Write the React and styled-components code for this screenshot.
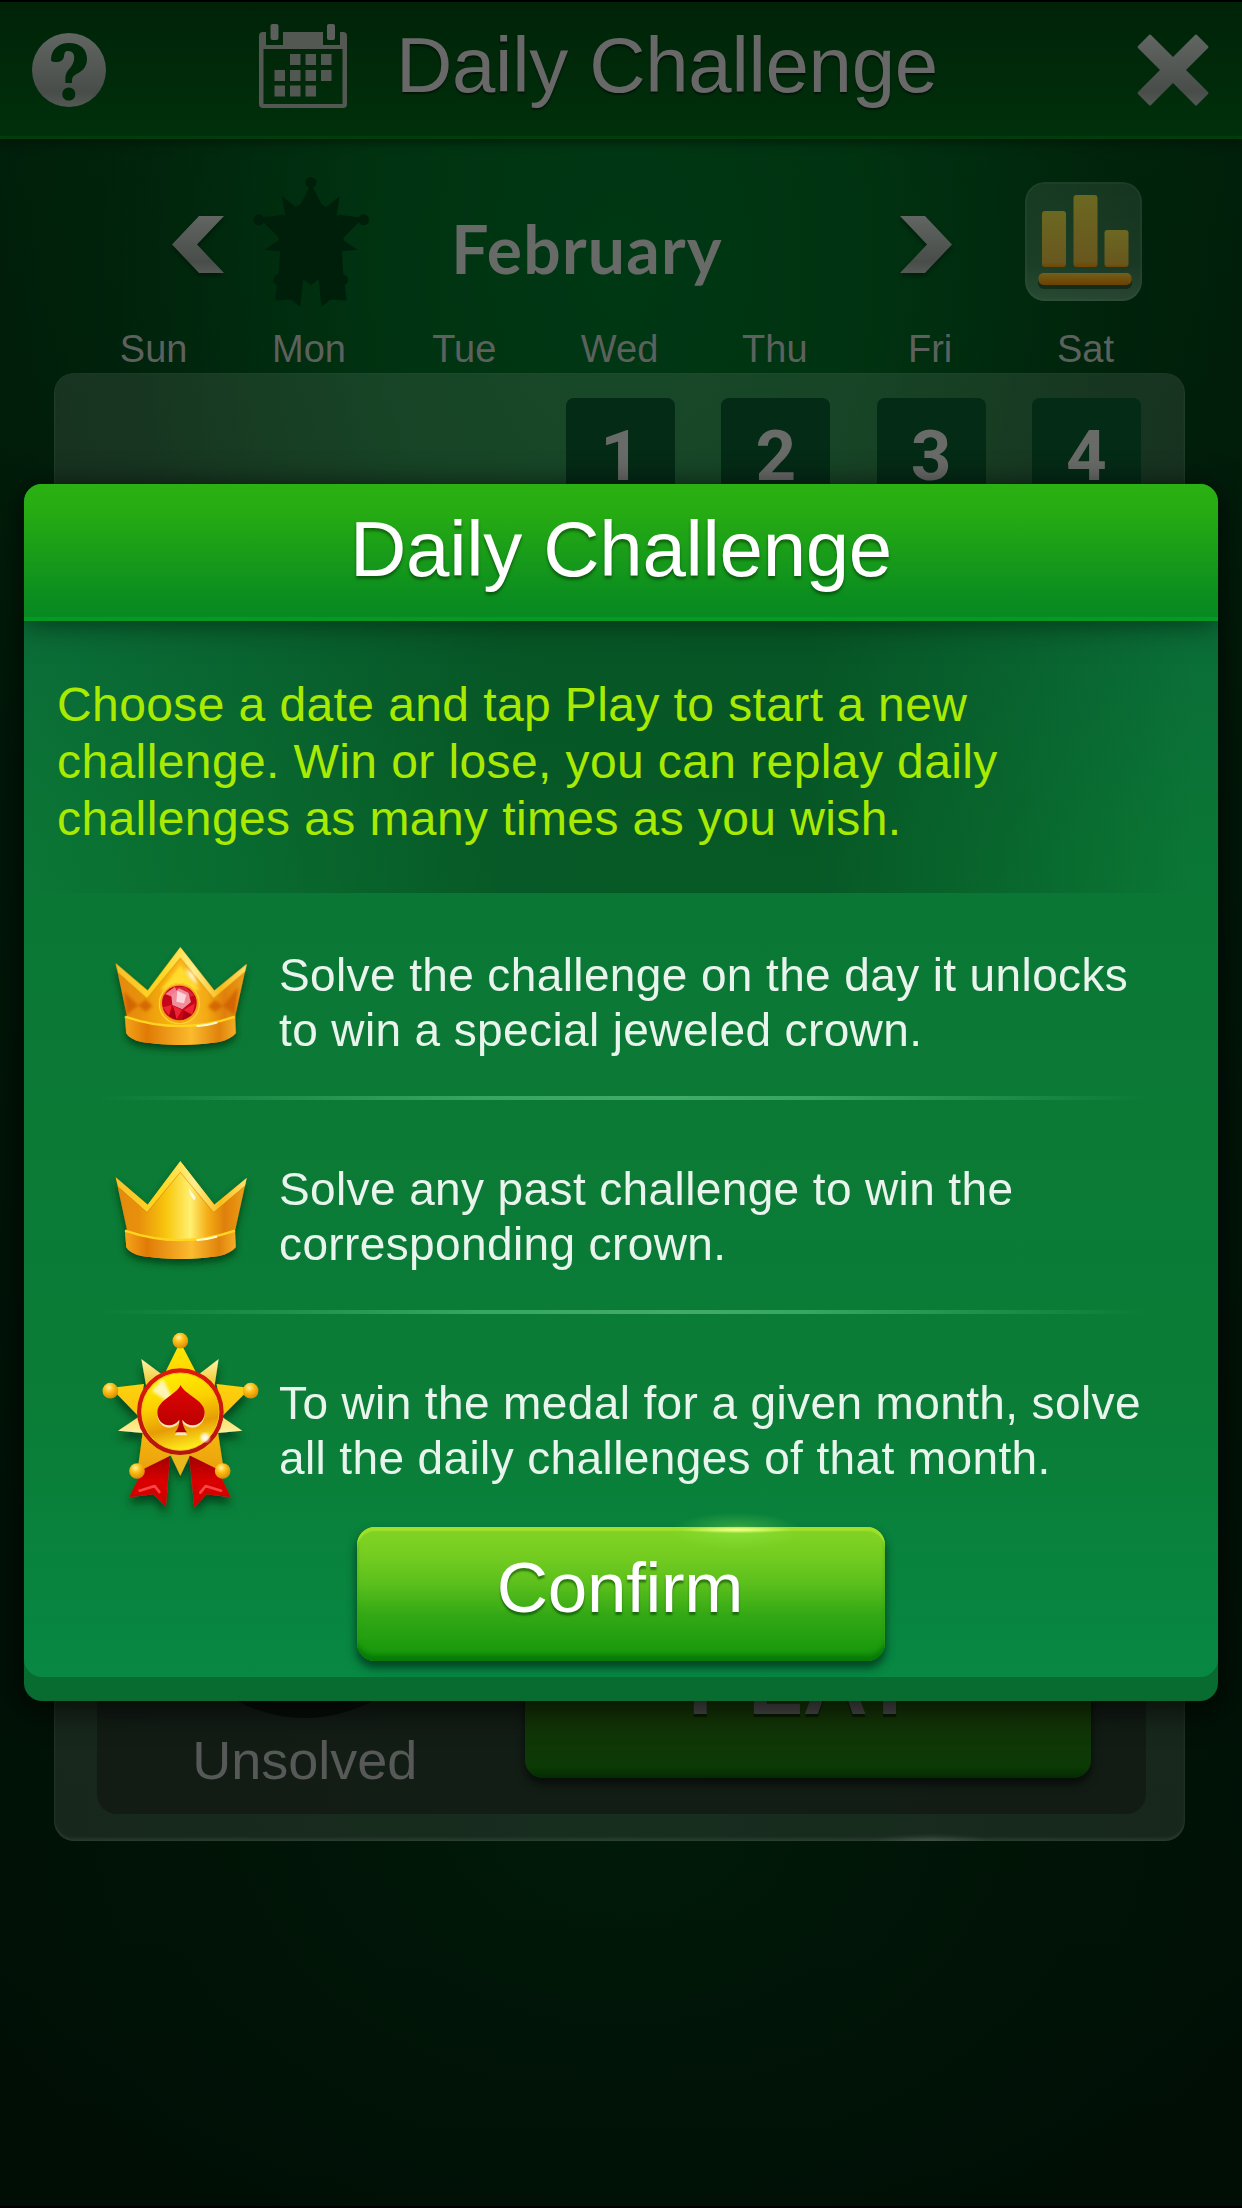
import React from "react";
import styled, { createGlobalStyle, css } from "styled-components";

const GlobalStyle = createGlobalStyle`
  * { box-sizing: border-box; }
  body {
    margin: 0;
    background: #000;
    font-family: "Liberation Sans", Arial, Helvetica, sans-serif;
    font-variant-ligatures: none;
  }
`;

const Page = styled.div`
  position: relative;
  display: flex;
  flex-direction: column;
  width: 1242px;
  height: 2208px;
  overflow: hidden;
  border-bottom: 2px solid #000;
  background:
    radial-gradient(ellipse 720px 520px at 50% 1820px, rgba(0, 30, 10, 0.75) 0%, rgba(0, 26, 9, 0.45) 50%, rgba(0, 20, 8, 0) 100%),
    radial-gradient(ellipse 700px 1000px at 50% 270px, #003814 0%, rgba(0, 54, 18, 0.88) 35%, rgba(0, 42, 14, 0.45) 72%, rgba(0, 30, 10, 0) 100%),
    linear-gradient(180deg, #001f0a 0%, #001a09 25%, #001106 75%, #000e05 100%);
`;

const TopBar = styled.header`
  flex: none;
  display: flex;
  align-items: flex-start;
  height: 139px;
  padding: 24px 33px 0 32px;
  border-top: 2px solid #000;
  border-bottom: 3px solid #003d0b;
  background: linear-gradient(180deg, #002308 0%, #002a0a 55%, #00300b 100%);
  box-shadow: 0 3px 8px rgba(0, 16, 6, 0.7);
`;

const HelpIcon = styled.svg`
  width: 74px;
  height: 74px;
  margin-top: 7px;
`;

const CalendarIcon = styled.svg`
  width: 88px;
  height: 86px;
  margin: -2px 0 0 153px;
`;

const Title = styled.h1`
  margin: -5px 0 0 49px;
  color: #686868;
  font-size: 78px;
  font-weight: 400;
  line-height: 88px;
  letter-spacing: -0.3px;
  white-space: nowrap;
  text-shadow: 0 2px 2px rgba(0, 0, 0, 0.5);
`;

const CloseIcon = styled.svg`
  width: 72px;
  height: 74px;
  margin: 7px 0 0 auto;
`;

const MonthRow = styled.nav`
  flex: none;
  display: flex;
  align-items: center;
  height: 196px;
  padding: 10px 0 0 172px;
`;

const Chevron = styled.svg`
  width: 52px;
  height: 62px;
  margin-left: ${(p) => (p.$next ? 96 : 0)}px;
  margin-top: 9px;
  transform: ${(p) => (p.$next ? "scaleX(-1)" : "none")};
  filter: drop-shadow(0 3px 2px rgba(0, 0, 0, 0.35));
`;

const MutedMedal = styled.div`
  display: flex;
  width: 118px;
  margin: -2px 0 0 28px;
`;

const Month = styled.h2`
  width: 434px;
  margin: 13px 0 0;
  color: #686a68;
  font-family: Lato, "Open Sans", sans-serif;
  font-size: 66px;
  font-weight: 700;
  line-height: 80px;
  letter-spacing: 1.2px;
  text-align: center;
`;

const StatsButton = styled.div`
  display: flex;
  width: 117px;
  height: 119px;
  margin: -2px 0 0 73px;
  border-radius: 20px;
  background: linear-gradient(180deg, rgba(255, 255, 255, 0.085), rgba(255, 255, 255, 0.1) 70%, rgba(255, 255, 255, 0.16));
  box-shadow: inset 0 0 0 2px rgba(255, 255, 255, 0.03);
`;

const Weekdays = styled.div`
  flex: none;
  display: grid;
  grid-template-columns: repeat(7, 155.3px);
  height: 37px;
  padding-left: 76px;
  color: #5c615d;
  font-size: 38px;
  line-height: 28px;
  text-align: center;
`;

const Panel = styled.section`
  flex: none;
  display: flex;
  flex-direction: column;
  justify-content: space-between;
  width: 1131px;
  height: 1468px;
  margin: 1px 0 0 54px;
  padding: 25px 39px 27px 23px;
  border-radius: 20px;
  background:
    radial-gradient(ellipse 60px 8px at 877px 100%, rgba(255, 255, 255, 0.12), transparent),
    rgba(255, 255, 255, 0.09);
  box-shadow:
    inset 0 0 3px 0 rgba(255, 255, 255, 0.06),
    inset 0 -3px 3px rgba(255, 255, 255, 0.07);
`;

const Days = styled.div`
  display: grid;
  grid-template-columns: repeat(7, 155.3px);
  justify-items: center;
`;

const Day = styled.div`
  grid-column-start: ${(p) => p.$column};
  width: 109px;
  height: 125px;
  border-radius: 8px;
  background: #042b16;
  color: #696b69;
  font-family: Roboto, "Liberation Sans", sans-serif;
  font-size: 71px;
  font-weight: 700;
  line-height: 115px;
  text-align: center;
`;

const Status = styled.div`
  display: flex;
  align-items: flex-end;
  gap: 108px;
  width: 1049px;
  height: 330px;
  margin-left: 20px;
  padding: 0 55px 36px 95px;
  border-radius: 0 0 20px 20px;
  background: rgba(15, 22, 17, 0.65);
`;

const Result = styled.div`
  display: flex;
  flex-direction: column;
  align-items: center;
  width: 226px;
  margin-bottom: -15px;
  color: #565957;
  font-size: 54px;
  line-height: 66px;
`;

const EmptyCrown = styled.svg`
  width: 148px;
  height: 108px;
  margin: 0 0 4px;
`;

const PlayButton = styled.div`
  width: 567px;
  height: 144px;
  padding-right: 9px;
  border-radius: 18px;
  background: linear-gradient(180deg, #1a3706 0%, #143407 55%, #0b3a05 92%, #042b02 100%);
  box-shadow: 0 6px 10px rgba(0, 0, 0, 0.6);
  color: #4a4a4a;
  font-size: 90px;
  font-weight: 700;
  line-height: 98px;
  text-align: center;
  text-shadow: 0 3px 1px rgba(0, 20, 0, 0.7);
`;

const Dialog = styled.section`
  position: absolute;
  top: 484px;
  left: 24px;
  display: flex;
  width: 1194px;
  height: 1217px;
  border-radius: 18px;
  background: #086b30;
  box-shadow: 0 6px 30px 4px rgba(0, 0, 0, 0.65);
`;

const DialogSheet = styled.div`
  display: flex;
  flex-direction: column;
  width: 1194px;
  height: 1193px;
  overflow: hidden;
  border-radius: 18px;
  background: linear-gradient(180deg, #0b6c38 11%, #0a7635 30%, #0b7935 45%, #0a7d37 78%, #078843 100%);
`;

const DialogTitle = styled.h2`
  flex: none;
  z-index: 1;
  height: 137px;
  margin: 0;
  border-bottom: 4px solid #059a24;
  background: linear-gradient(180deg, #2cb112 0%, #26ab13 22%, #0a8c20 88%, #078a22 100%);
  box-shadow: 0 4px 26px rgba(0, 30, 12, 0.65);
  color: #fff;
  font-size: 78px;
  font-weight: 400;
  line-height: 131px;
  letter-spacing: -0.3px;
  text-align: center;
  text-shadow: 0 3px 3px rgba(0, 50, 0, 0.55);
`;

const Intro = styled.p`
  flex: none;
  height: 272px;
  margin: 0;
  padding: 55px 0 0 33px;
  background: linear-gradient(90deg, rgba(5, 75, 30, 0) 0%, rgba(5, 75, 30, 0.3) 20%, rgba(5, 74, 30, 0.65) 40%, rgba(5, 74, 30, 0.68) 66%, rgba(5, 75, 30, 0.32) 84%, rgba(5, 75, 30, 0) 98%);
  color: #a9ea02;
  font-size: 48px;
  line-height: 57px;
  letter-spacing: 0.4px;
  white-space: pre-line;
`;

const Rules = styled.ul`
  flex: none;
  margin: -7px 0 0;
  padding: 0;
  list-style: none;
`;

const Rule = styled.li`
  display: flex;
  align-items: flex-start;
  height: ${(p) => (p.$last ? 213 : 214)}px;
  padding-left: 65px;
  ${(p) =>
    !p.$last &&
    css`
      background: linear-gradient(90deg, transparent 6%, #36a660 38%, #43ad68 54%, #36a660 66%, transparent 94%) 0 100% / 100% 4px no-repeat;
    `}
`;

const RuleText = styled.p`
  margin: 0;
  padding-top: 62px;
  color: #e9f5ec;
  font-size: 46px;
  line-height: 54.5px;
  letter-spacing: 0.38px;
  white-space: pre-line;
`;

const RuleIcon = styled.div`
  flex: none;
  width: 190px;
  padding-top: ${(p) => p.$top}px;
`;

const Confirm = styled.button`
  position: relative;
  flex: none;
  align-self: center;
  width: 528px;
  height: 134px;
  padding: 0 2px 13px 0;
  border: 0;
  border-radius: 18px;
  background: linear-gradient(180deg, #82d424 0%, #76cd21 20%, #5cc01c 42%, #34a915 65%, #1c9b0e 90%, #16960d 100%);
  box-shadow:
    inset 0 4px 1px #a1df2b,
    inset 0 -8px 5px -2px #087a06,
    0 6px 8px 1px rgba(0, 52, 28, 0.8);
  color: #fff;
  font: 71px/118px "Liberation Sans", Arial, sans-serif;
  letter-spacing: -0.3px;
  text-shadow: 0 3px 2px rgba(0, 60, 0, 0.55);
`;

const Glint = styled.span`
  position: absolute;
  top: -16px;
  left: 310px;
  width: 140px;
  height: 40px;
  background:
    radial-gradient(ellipse 56px 3.5px at 50% 47%, #fffd9a, rgba(240, 255, 120, 0.6) 50%, transparent),
    radial-gradient(ellipse 66px 19px at 50% 50%, rgba(150, 240, 80, 0.38), transparent);
`;

function SteelGradient({ id }) {
  return (
    <linearGradient id={id} x1="0" y1="0" x2="0" y2="1">
      <stop offset="0" stopColor="#616662" />
      <stop offset=".8" stopColor="#484d49" />
      <stop offset="1" stopColor="#545955" />
    </linearGradient>
  );
}

function Help() {
  return (
    <HelpIcon viewBox="0 0 74 74">
      <defs><SteelGradient id="helpFill" /></defs>
      <circle cx="37" cy="37" r="37" fill="url(#helpFill)" />
      <path d="M19 27C19 16 27 10 37 10C48 10 55 16 55 26C55 36 48 39 43 42C40 44 40 46 40 50H33.500C33 42 34 39 38 35C43 30 45 18 36 18C29 18 36 28 25.500 29C21 29 19 28.500 19 27Z" fill="#00290a" />
      <circle cx="36.800" cy="61" r="6.600" fill="#00290a" />
    </HelpIcon>
  );
}

const dots = [[31, 30], [46.5, 30], [62, 30], [15.5, 46], [31, 46], [46.5, 46], [62, 46], [15.5, 61.5], [31, 61.5], [46.5, 61.5]];

function Calendar() {
  return (
    <CalendarIcon viewBox="0 0 88 86">
      <path d="M4 8H7V21H24V8H64V21H81V8H84Q88 8 88 12V80Q88 84 84 84H4Q0 84 0 80V12Q0 8 4 8ZM4.500 25V80H83.500V25Z" fill="#535853" fillRule="evenodd" />
      <rect x="11.500" y="0" width="8" height="16" rx="2" fill="#5b605c" />
      <rect x="68" y="0" width="8" height="16" rx="2" fill="#5b605c" />
      {dots.map(([x, y]) => (
        <rect key={x + "-" + y} x={x} y={y} width="10.500" height="11" fill="#525752" />
      ))}
    </CalendarIcon>
  );
}

function Close() {
  return (
    <CloseIcon viewBox="0 0 72 74">
      <defs><SteelGradient id="closeFill" /></defs>
      <path d="M12 2Q13 1 14 2L36 24L58 2Q59 1 60 2L71 13Q72 14 71 15L49 37L71 59Q72 60 71 61L60 72Q59 73 58 72L36 50L14 72Q13 73 12 72L1 61Q0 60 1 59L23 37L1 15Q0 14 1 13Z" fill="url(#closeFill)" />
    </CloseIcon>
  );
}

function Arrow({ next }) {
  const id = next ? "nextFill" : "prevFill";
  return (
    <Chevron $next={next} viewBox="0 0 52 62">
      <defs><SteelGradient id={id} /></defs>
      <path d="M0 28.500L27 0H52L25 28.500L52 57H27Z" fill={`url(#${id})`} />
    </Chevron>
  );
}

const bars = [[17, 29, 56], [48.5, 13, 72], [79.5, 48, 37]];

function Stats() {
  return (
    <svg width="117" height="119" viewBox="0 0 117 119">
      <defs>
        <linearGradient id="barFill" x1="0" y1="0" x2="0" y2="1">
          <stop offset="0" stopColor="#6b6821" />
          <stop offset=".92" stopColor="#68571e" />
          <stop offset="1" stopColor="#724600" />
        </linearGradient>
        <linearGradient id="baseFill" x1="0" y1="0" x2="0" y2="1">
          <stop offset="0" stopColor="#73601b" />
          <stop offset="1" stopColor="#6c4000" />
        </linearGradient>
      </defs>
      <rect x="13" y="95" width="94" height="12" rx="6" fill="#02160a" opacity=".5" />
      {bars.map(([x, y, h]) => (
        <rect key={x} x={x} y={y} width="24" height={h} rx="3" fill="url(#barFill)" />
      ))}
      <rect x="13.500" y="91" width="93" height="12" rx="5" fill="url(#baseFill)" />
    </svg>
  );
}

const ballSpots = [[274, 92], [64, 242], [485, 242], [144, 483], [401, 483]];
const ribbonPaths = ["M243 434L231 592L193 553L120 562L166 470Z", "M300 434L316 592L353 553L425 562L382 470Z"];
const spikesPath = "M157 147L222 196L172 230ZM389 147L326 196L376 230ZM87 362L150 320L172 370ZM460 362L398 320L376 370Z";
const armsPath = "M225 195L266 112H282L325 195ZM165 222L82 232L78 246L148 318ZM383 222L466 232L472 246L400 318ZM161 368L148 465L165 476L250 434ZM387 368L402 465L383 476L298 434Z";

function SilhouetteMedal() {
  return (
    <svg width="118" height="131" viewBox="39 66 470 526">
      <g fill="#001f0b">
        <path d={spikesPath} />
        <path d={armsPath} />
        <circle cx="274" cy="305" r="132" />
        {ballSpots.map(([x, y]) => <circle key={x} cx={x} cy={y} r="22" />)}
        <path d="M150 350H398L402 480H306L274 505L242 480H146Z" />
        <path d="M248 430L231 592L193 562L130 566L150 400ZM300 430L316 592L353 562L417 566L397 400Z" />
      </g>
    </svg>
  );
}

function Medal() {
  return (
    <svg width="190" height="216" viewBox="0 12 570 648">
      <defs>
        <linearGradient id="rayFill" x1="0" y1="0" x2="0" y2="1">
          <stop offset="0" stopColor="#ffe600" />
          <stop offset=".5" stopColor="#fcc50d" />
          <stop offset="1" stopColor="#eba20b" />
        </linearGradient>
        <linearGradient id="spikeFill" x1="0" y1="0" x2="0" y2="1">
          <stop offset="0" stopColor="#fff3a8" />
          <stop offset=".3" stopColor="#f3cf3c" />
          <stop offset=".75" stopColor="#f8dc62" />
          <stop offset="1" stopColor="#fff0a0" />
        </linearGradient>
        <radialGradient id="ballFill" cx=".4" cy=".3" r=".75">
          <stop offset="0" stopColor="#fff3a0" />
          <stop offset=".4" stopColor="#fdbf15" />
          <stop offset="1" stopColor="#d88404" />
        </radialGradient>
        <linearGradient id="faceFill" x1=".3" y1="0" x2=".55" y2="1">
          <stop offset="0" stopColor="#fff000" />
          <stop offset=".4" stopColor="#fbd000" />
          <stop offset=".7" stopColor="#e79c06" />
          <stop offset="1" stopColor="#fff01d" />
        </linearGradient>
        <linearGradient id="ringFill" x1="0" y1="0" x2="0" y2="1">
          <stop offset="0" stopColor="#e01a08" />
          <stop offset="1" stopColor="#b31410" />
        </linearGradient>
        <linearGradient id="spadeFill" x1="0" y1="0" x2="0" y2="1">
          <stop offset="0" stopColor="#e00505" />
          <stop offset="1" stopColor="#b50000" />
        </linearGradient>
        <linearGradient id="ribbonFill" x1="0" y1="0" x2="0" y2="1">
          <stop offset="0" stopColor="#9d0303" />
          <stop offset=".5" stopColor="#d90606" />
          <stop offset="1" stopColor="#cc0202" />
        </linearGradient>
        <filter id="medalShadow" x="-20%" y="-20%" width="140%" height="150%">
          <feDropShadow dx="0" dy="20" stdDeviation="13" floodColor="#002d12" floodOpacity=".75" />
        </filter>
        <filter id="soften"><feGaussianBlur stdDeviation="5" /></filter>
      </defs>
      <g filter="url(#medalShadow)">
        {ribbonPaths.map((d) => <path key={d} d={d} fill="url(#ribbonFill)" />)}
        <path d="M152 542L197 528L211 546M396 542L350 528L334 548" fill="none" stroke="#fb4444" strokeWidth="8" strokeLinejoin="round" strokeLinecap="round" />
        <path d={spikesPath} fill="url(#spikeFill)" />
        <path d="M240 425H308L274 497Z" fill="#e9b81a" />
        <path d={armsPath} fill="url(#rayFill)" />
      </g>
      {ballSpots.map(([x, y]) => <circle key={x} cx={x} cy={y} r="23.500" fill="url(#ballFill)" />)}
      <circle cx="274" cy="305" r="130" fill="url(#ringFill)" />
      <circle cx="274" cy="305" r="116" fill="url(#faceFill)" stroke="#f9c11c" strokeWidth="3" />
      <path d="M266 295L188 242L222 207Z" fill="#fff" opacity=".7" filter="url(#soften)" />
      <circle cx="348" cy="383" r="13" fill="#fff" opacity=".9" filter="url(#soften)" />
      <path d="M275 230C285 258 347 275 347 312C347 353 300 367 280 337C281 357 287 365 295 376H257C266 365 271 357 271 337C250 367 205 353 205 312C205 275 264 258 275 230Z" fill="#fff1cf" opacity=".85" />
      <path d="M275 225C285 253 347 270 347 307C347 348 300 359 280 329C281 347 287 357 294 367H258C266 357 271 347 271 329C250 359 205 348 205 307C205 270 264 253 275 225Z" fill="url(#spadeFill)" />
    </svg>
  );
}

function Crown({ jewel }) {
  const id = jewel ? "jeweled" : "plain";
  return (
    <svg width="190" height="150" viewBox="0 0 570 450">
      <defs>
        <linearGradient id={id + "Body"} x1="0" y1="0" x2="1" y2="0">
          <stop offset="0" stopColor="#e58a08" />
          <stop offset=".18" stopColor="#e8900a" />
          <stop offset=".4" stopColor={jewel ? "#f6b210" : "#f9ca12"} />
          <stop offset=".57" stopColor={jewel ? "#f9ba25" : "#fff071"} />
          <stop offset=".7" stopColor={jewel ? "#f3a812" : "#f5ae16"} />
          <stop offset=".83" stopColor="#df7f07" />
          <stop offset="1" stopColor="#eda11a" />
        </linearGradient>
        <linearGradient id={id + "Band"} x1="0" y1="0" x2="1" y2="0">
          <stop offset="0" stopColor="#f5a41b" />
          <stop offset=".2" stopColor="#e07b06" />
          <stop offset=".6" stopColor="#fcbb2e" />
          <stop offset=".85" stopColor="#e0830c" />
          <stop offset="1" stopColor="#f5ad26" />
        </linearGradient>
        <linearGradient id={id + "Rim"} x1="0" y1="0" x2="1" y2="0">
          <stop offset="0" stopColor="#f7c22e" />
          <stop offset=".35" stopColor="#ffd820" />
          <stop offset=".5" stopColor="#ffe45c" />
          <stop offset=".6" stopColor="#ffed90" />
          <stop offset=".8" stopColor="#fbbd18" />
          <stop offset="1" stopColor="#ffe070" />
        </linearGradient>
        <filter id={id + "Shadow"} x="-20%" y="-20%" width="140%" height="150%">
          <feDropShadow dx="0" dy="14" stdDeviation="11" floodColor="#00320f" floodOpacity=".75" />
        </filter>
        <filter id={id + "Blur"}><feGaussianBlur stdDeviation="5" /></filter>
      </defs>
      <path d="M80 130L176 212L274 82L376 212L473 132L438 290L440 340Q425 358 390 366Q274 384 158 366Q122 358 112 340L108 290L114 288Z" fill={`url(#${id}Body)`} filter={`url(#${id}Shadow)`} />
      {jewel && (
        <g filter="url(#jeweledBlur)">
          <path d="M105 215L148 256L112 285ZM148 256L170 238L190 258L170 276ZM448 200L402 258L437 285ZM402 258L378 240L356 260L378 276Z" fill="#ce5c04" opacity=".8" />
          <path d="M274 135L215 210H333Z" fill="#ffdc2e" />
        </g>
      )}
      <path d="M80 130L176 212L274 82L376 212L473 132L468 155L374 234L274 112L174 234L88 158Z" fill={`url(#${id}Rim)`} />
      <path d="M88 160L174 236L274 115L374 236L466 158" fill="none" stroke="#d58a0a" strokeWidth="3" opacity=".6" />
      <path d="M108 290Q274 350 438 290L440 340Q425 358 390 366Q274 384 158 366Q122 358 112 340Z" fill={`url(#${id}Band)`} />
      <path d="M108 290Q274 347 438 290" fill="none" stroke="#ffd51f" strokeWidth="7" />
      <path d="M325 318Q355 316 382 308" fill="none" stroke="#fffbd0" strokeWidth="6" strokeLinecap="round" />
      {!jewel && <path d="M300 165L320 190L316 200Q302 185 300 165Z" fill="#fff" opacity=".8" />}
      {jewel && (
        <g>
          <path d="M288 145Q300 180 328 195L312 160Z" fill="#fff8cc" filter="url(#jeweledBlur)" />
          <circle cx="271" cy="251" r="62" fill="#f2a20c" />
          <circle cx="271" cy="251" r="60" fill="none" stroke="#ffd03a" strokeWidth="4" />
          <circle cx="271" cy="249" r="52" fill="#c60618" />
          <path d="M228 222L258 200L275 240Z" fill="#f4798a" />
          <path d="M258 200L290 201L275 238ZM290 201L316 226L276 240Z" fill="#d8243a" />
          <path d="M247 226L270 205L298 218L306 246L280 268L250 255Z" fill="#ef8d9a" />
          <path d="M265 212L292 225L285 250L262 245Z" fill="#fbd3d8" />
          <path d="M222 262L248 255L240 287ZM252 258L279 270L262 298ZM284 270L310 284L318 250Z" fill="#ee2436" />
          <path d="M240 288L254 262L262 298ZM285 272L308 286L280 300Z" fill="#a90012" />
        </g>
      )}
    </svg>
  );
}

const weekdays = ["Sun", "Mon", "Tue", "Wed", "Thu", "Fri", "Sat"];
const firstWeek = [1, 2, 3, 4];

export default function App() {
  return (
    <Page>
      <GlobalStyle />
      <TopBar>
        <Help />
        <Calendar />
        <Title>Daily Challenge</Title>
        <Close />
      </TopBar>
      <MonthRow>
        <Arrow />
        <MutedMedal><SilhouetteMedal /></MutedMedal>
        <Month>February</Month>
        <Arrow next />
        <StatsButton><Stats /></StatsButton>
      </MonthRow>
      <Weekdays>
        {weekdays.map((d) => <span key={d}>{d}</span>)}
      </Weekdays>
      <Panel>
        <Days>
          {firstWeek.map((n) => <Day key={n} $column={n + 3}>{n}</Day>)}
        </Days>
        <Status>
          <Result>
            <EmptyCrown viewBox="0 0 148 108">
              <path d="M2 0H146V84Q74 122 2 84Z" fill="#070d09" />
            </EmptyCrown>
            Unsolved
          </Result>
          <PlayButton>PLAY</PlayButton>
        </Status>
      </Panel>
      <Dialog>
        <DialogSheet>
          <DialogTitle>Daily Challenge</DialogTitle>
          <Intro>{"Choose a date and tap Play to start a new\nchallenge. Win or lose, you can replay daily\nchallenges as many times as you wish."}</Intro>
          <Rules>
            <Rule>
              <RuleIcon $top={34}><Crown jewel /></RuleIcon>
              <RuleText>{"Solve the challenge on the day it unlocks\nto win a special jeweled crown."}</RuleText>
            </Rule>
            <Rule>
              <RuleIcon $top={34}><Crown /></RuleIcon>
              <RuleText>{"Solve any past challenge to win the\ncorresponding crown."}</RuleText>
            </Rule>
            <Rule $last>
              <RuleIcon $top={0}><Medal /></RuleIcon>
              <RuleText>{"To win the medal for a given month, solve\nall the daily challenges of that month."}</RuleText>
            </Rule>
          </Rules>
          <Confirm>Confirm<Glint /></Confirm>
        </DialogSheet>
      </Dialog>
    </Page>
  );
}
